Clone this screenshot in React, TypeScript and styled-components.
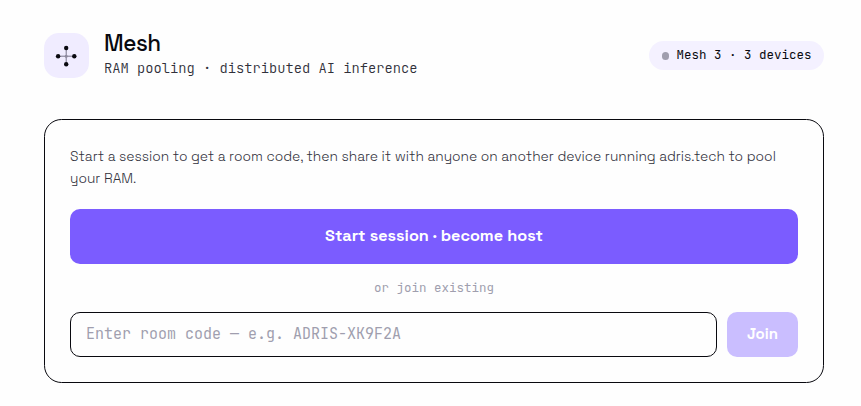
import React from "react";
import styled, { createGlobalStyle } from "styled-components";

const sans = `"Space Grotesk", Inter, "Liberation Sans", sans-serif`;
const mono = `"JetBrains Mono", "DejaVu Sans Mono", "Liberation Mono", monospace`;

const GlobalStyle = createGlobalStyle`
  *, *::before, *::after { box-sizing: border-box; }
  body { margin: 0; background: #fefefe; font-family: ${sans}; color: #09090f; }
`;

const Page = styled.main`
  height: 406px;
  padding: 33px 37px 0 44px;
`;

const Header = styled.header`
  display: flex;
  align-items: center;
  height: 45px;
  margin-bottom: 41px;
`;

const Logo = styled.div`
  display: flex;
  width: 45px;
  height: 45px;
  margin-right: 15px;
  border-radius: 15px;
  background: #f0ecff;
`;

const Heading = styled.div`
  flex: 1;
  height: 45px;
`;

const Title = styled.h1`
  margin: -3px 0 0;
  font-size: 22.5px;
  line-height: 28px;
  font-weight: 550;
  letter-spacing: -0.45px;
`;

const Subtitle = styled.p`
  margin: 0;
  font: 300 13.75px/20px ${mono};
  color: #30303a;
  white-space: nowrap;
`;

const Badge = styled.div`
  display: flex;
  align-items: center;
  gap: 7px;
  height: 29px;
  padding: 0 12.5px 0 12.5px;
  border-radius: 15px;
  background: #f4f1ff;
  font: 12.5px/20px ${mono};
  white-space: nowrap;
`;

const BadgeText = styled.span`
  padding-bottom: 2px;
`;

const Dot = styled.i`
  width: 7.5px;
  height: 7.5px;
  margin-top: 1px;
  border-radius: 50%;
  background: #a09eae;
`;

const Card = styled.section`
  height: 264px;
  padding: 25px;
  border: 1px solid #09090f;
  border-radius: 17.5px;
  background: #fefefe;
`;

const Intro = styled.p`
  margin: 0 0 20px;
  font-size: 13.75px;
  line-height: 22px;
  font-weight: 300;
  color: #30303a;
`;

const Line = styled.span`
  display: block;
  white-space: nowrap;
`;

const Button = styled.button`
  border: 0;
  padding: 0 0 2px;
  border-radius: 10px;
  background: #7b5cff;
  color: #fff;
  font-family: ${sans};
  font-weight: 700;
`;

const StartButton = styled(Button)`
  display: block;
  width: 100%;
  height: 55px;
  font-size: 16.25px;
`;

const Divider = styled.div`
  height: 48px;
  text-align: center;
  font: 12.5px/48px ${mono};
  color: #a09eae;
`;

const JoinRow = styled.div`
  display: flex;
  gap: 10px;
  height: 45px;
`;

const RoomInput = styled.input`
  flex: 1;
  min-width: 0;
  padding: 0 15px 1px;
  border: 1px solid #09090f;
  border-radius: 10px;
  background: #fefefe;
  color: #09090f;
  font: 15px ${mono};
  outline: none;
  &::placeholder { color: #a09eae; opacity: 1; }
`;

const JoinButton = styled(Button)`
  width: 71px;
  font-size: 15px;
  background: #cabeff;
`;

const MeshIcon = () => (
  <svg width="45" height="45" viewBox="0 0 45 45" fill="#09090f">
    <path d="M22.2 15v16M14.2 23.2h16" stroke="#77748a" strokeWidth="1" />
    <circle cx="22.2" cy="15" r="2.2" />
    <circle cx="22.2" cy="31.2" r="2.2" />
    <circle cx="14.1" cy="23.2" r="2.2" />
    <circle cx="30.3" cy="23.2" r="2.2" />
    <circle cx="22.2" cy="23.2" r="1.5" fill="#8d899e" />
  </svg>
);

export default function App() {
  return (
    <Page>
      <GlobalStyle />
      <Header>
        <Logo><MeshIcon /></Logo>
        <Heading>
          <Title>Mesh</Title>
          <Subtitle>RAM pooling · distributed AI inference</Subtitle>
        </Heading>
        <Badge><Dot /><BadgeText>Mesh 3 · 3 devices</BadgeText></Badge>
      </Header>
      <Card>
        <Intro>
          <Line>Start a session to get a room code, then share it with anyone on another device running adris.tech to pool</Line>
          <Line>your RAM.</Line>
        </Intro>
        <StartButton type="button">Start session · become host</StartButton>
        <Divider>or join existing</Divider>
        <JoinRow>
          <RoomInput placeholder="Enter room code — e.g. ADRIS-XK9F2A" />
          <JoinButton type="button" disabled>Join</JoinButton>
        </JoinRow>
      </Card>
    </Page>
  );
}
